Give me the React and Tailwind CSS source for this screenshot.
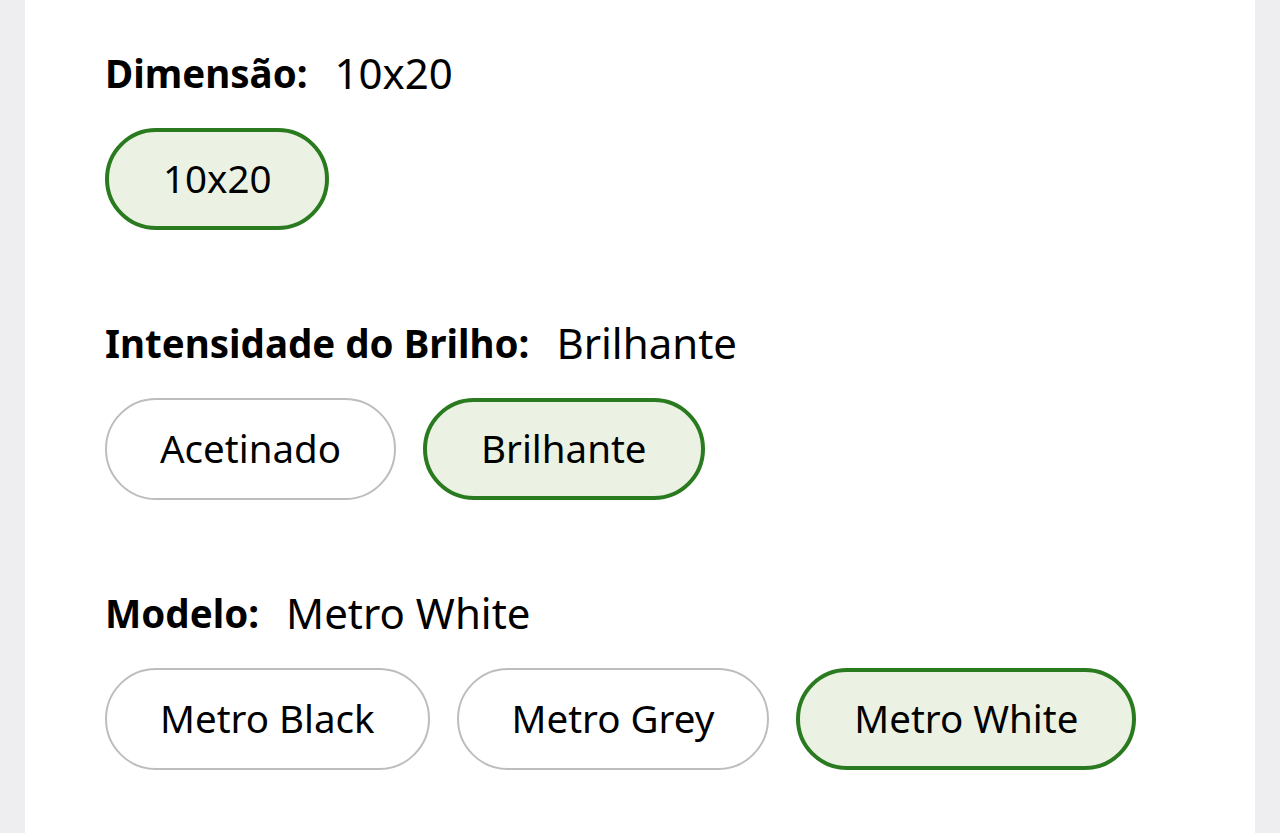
export default function App() {
  const sections = [
    { label: "Dimensão:", value: "10x20", options: ["10x20"], selected: "10x20" },
    { label: "Intensidade do Brilho:", value: "Brilhante", options: ["Acetinado", "Brilhante"], selected: "Brilhante" },
    { label: "Modelo:", value: "Metro White", options: ["Metro Black", "Metro Grey", "Metro White"], selected: "Metro White" },
  ];
  return (
    <div className="min-h-[833px] bg-[#eeeef0] px-[25px]" style={{ fontFamily: "'Noto Sans', sans-serif" }}>
      <div className="bg-white min-h-[833px] pl-[80px] pt-[48px] text-black">
        {sections.map((s) => (
          <div key={s.label} className="h-[270px]">
            <div className="flex items-center gap-[27px] h-[50px] leading-[50px]">
              <span className="font-bold text-[38.5px]">{s.label}</span>
              <span className="text-[42px]">{s.value}</span>
            </div>
            <div className="flex gap-[27px] mt-[30px]">
              {s.options.map((o) => {
                const sel = o === s.selected;
                return (
                  <div
                    key={o}
                    className={
                      sel
                        ? "h-[102px] px-[54px] rounded-full border-[4px] border-[#2a7a1f] bg-[#ebf2e3] flex items-center justify-center text-[38.5px]"
                        : "h-[102px] px-[53px] rounded-full border-[2px] border-[#bdbdbd] bg-white flex items-center justify-center text-[38.5px]"
                    }
                  >
                    {o}
                  </div>
                );
              })}
            </div>
          </div>
        ))}
      </div>
    </div>
  );
}
